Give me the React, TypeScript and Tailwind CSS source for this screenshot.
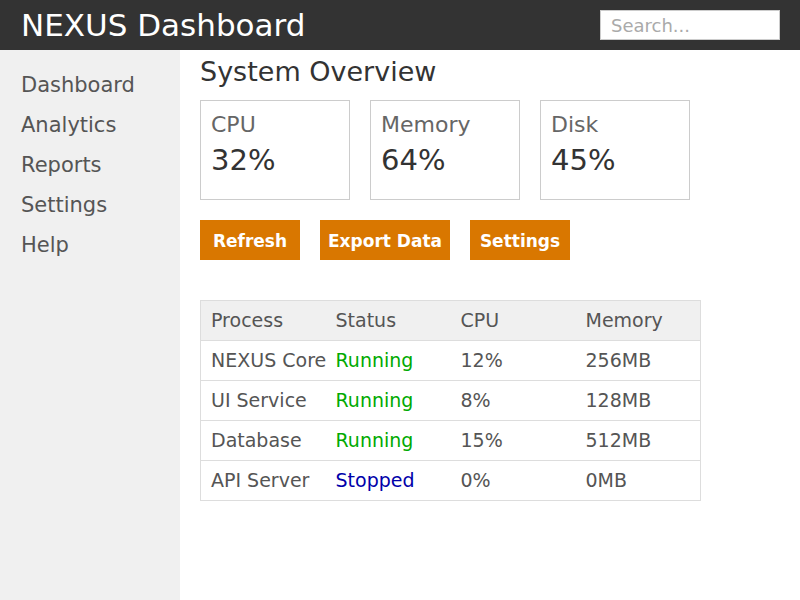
import React from 'react';

const processes = [
    { name: "NEXUS Core", status: "Running", cpu: "12%", mem: "256MB" },
    { name: "UI Service", status: "Running", cpu: "8%", mem: "128MB" },
    { name: "Database", status: "Running", cpu: "15%", mem: "512MB" },
    { name: "API Server", status: "Stopped", cpu: "0%", mem: "0MB" },
];

const stats = [
    { label: "CPU", value: "32%" },
    { label: "Memory", value: "64%" },
    { label: "Disk", value: "45%" },
];

const App = () => {
    return (
        <div className="w-[800px] h-[600px] flex flex-col bg-white overflow-hidden font-['DejaVu_Sans',sans-serif]">
            <header className="h-[50px] shrink-0 bg-[#333333] flex items-center justify-between pl-[21px] pr-[20px]">
                <h1 className="text-white text-[31px] leading-none">NEXUS Dashboard</h1>
                <input
                    type="text"
                    placeholder="Search..."
                    className="w-[180px] h-[30px] bg-white border border-[#cccccc] px-[10px] text-[18px] placeholder:text-[#aaaaaa] outline-none"
                />
            </header>
            <div className="flex flex-1">
                <nav className="w-[180px] bg-[#f0f0f0] pt-[16px] pl-[21px] flex flex-col">
                    {["Dashboard", "Analytics", "Reports", "Settings", "Help"].map((item) => (
                        <a key={item} href="#" className="h-[40px] flex items-center text-[21px] text-[#555555]">
                            {item}
                        </a>
                    ))}
                </nav>
                <main className="flex-1 px-[20px] pt-[6px]">
                    <h2 className="text-[27px] text-[#333333] leading-[32px] mb-[12px]">System Overview</h2>
                    <div className="flex gap-[20px]">
                        {stats.map((s) => (
                            <div key={s.label} className="w-[150px] h-[100px] border border-[#cccccc] px-[10px] pt-[11px]">
                                <div className="text-[22px] text-[#666666] leading-[26px]">{s.label}</div>
                                <div className="text-[29px] text-[#333333] leading-[36px] mt-[4px]">{s.value}</div>
                            </div>
                        ))}
                    </div>
                    <div className="flex gap-[20px] mt-[20px]">
                        <button className="w-[100px] h-[40px] pt-[4px] bg-[#d97700] text-white font-bold text-[17px]">Refresh</button>
                        <button className="w-[130px] h-[40px] pt-[4px] bg-[#d97700] text-white font-bold text-[17px]">Export Data</button>
                        <button className="w-[100px] h-[40px] pt-[4px] bg-[#d97700] text-white font-bold text-[17px]">Settings</button>
                    </div>
                    <table className="mt-[40px] w-[500px] table-fixed border-collapse border border-[#dddddd] text-[19px] text-[#555555]">
                        <thead>
                            <tr className="bg-[#f0f0f0] h-[40px]">
                                <th className="w-[125px] text-left font-normal px-[10px] border-b border-[#dddddd]">Process</th>
                                <th className="w-[125px] text-left font-normal px-[10px] border-b border-[#dddddd]">Status</th>
                                <th className="w-[125px] text-left font-normal px-[10px] border-b border-[#dddddd]">CPU</th>
                                <th className="w-[125px] text-left font-normal px-[10px] border-b border-[#dddddd]">Memory</th>
                            </tr>
                        </thead>
                        <tbody>
                            {processes.map((p) => (
                                <tr key={p.name} className="h-[40px] border-b border-[#dddddd]">
                                    <td className="px-[10px] whitespace-nowrap overflow-visible">{p.name}</td>
                                    <td className={p.status === "Running" ? "px-[10px] text-[#00aa00]" : "px-[10px] text-[#0000aa]"}>
                                        {p.status}
                                    </td>
                                    <td className="px-[10px]">{p.cpu}</td>
                                    <td className="px-[10px]">{p.mem}</td>
                                </tr>
                            ))}
                        </tbody>
                    </table>
                </main>
            </div>
        </div>
    )
}

export default App
